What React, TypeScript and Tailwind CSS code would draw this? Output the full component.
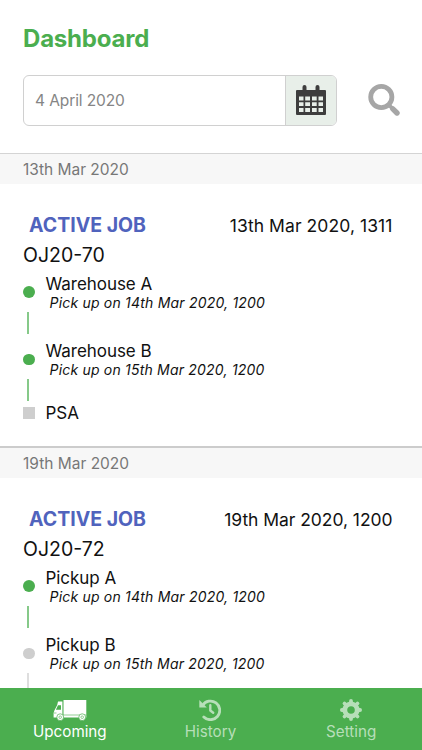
import React from "react";

type Stop = { name: string; note?: string; done: boolean; square?: boolean };
type Job = { day: string; time: string; timeClass: string; id: string; divider: string; height: string; stops: Stop[] };

const jobs: Job[] = [
  {
    day: "13th Mar 2020",
    time: "13th Mar 2020, 1311",
    timeClass: "tracking-[0.08px]",
    id: "OJ20-70",
    divider: "h-[31px] border-t border-[#d4d4d4]",
    height: "h-[293px]",
    stops: [
      { name: "Warehouse A", note: "Pick up on 14th Mar 2020, 1200", done: true },
      { name: "Warehouse B", note: "Pick up on 15th Mar 2020, 1200", done: true },
      { name: "PSA", done: false, square: true },
    ],
  },
  {
    day: "19th Mar 2020",
    time: "19th Mar 2020, 1200",
    timeClass: "tracking-[-0.05px]",
    id: "OJ20-72",
    divider: "h-8 border-t-2 border-[#cccccc]",
    height: "h-[294px]",
    stops: [
      { name: "Pickup A", note: "Pick up on 14th Mar 2020, 1200", done: true },
      { name: "Pickup B", note: "Pick up on 15th Mar 2020, 1200", done: false },
      { name: "PSA", done: false, square: true },
    ],
  },
];

function CalendarIcon() {
  return (
    <svg className="mb-[2px] h-[30px] w-[30px]" viewBox="0 0 30 30" fill="#3d3d3d">
      <path fillRule="evenodd" d="M1 5H6.5V2Q6.5 0 8.5 0T10.5 2V5H19.5V2Q19.5 0 21.5 0T23.5 2V5H29Q30 5 30 6V29Q30 30 29 30H1Q0 30 0 29V6Q0 5 1 5ZM3 11.5V15.5H7.5V11.5ZM9.2 11.5V15.5H14V11.5ZM16 11.5V15.5H20.7V11.5ZM22.5 11.5V15.5H27V11.5ZM3 17.3V21H7.5V17.3ZM9.2 17.3V21H14V17.3ZM16 17.3V21H20.7V17.3ZM22.5 17.3V21H27V17.3ZM3 23V27H7.5V23ZM9.2 23V27H14V23ZM16 23V27H20.7V23ZM22.5 23V27H27V23Z" />
    </svg>
  );
}

function SearchIcon() {
  return (
    <svg className="mb-px h-8 w-8" viewBox="0 0 32 32" fill="none" stroke="#a6a6a6">
      <circle cx="13.3" cy="13" r="10.6" strokeWidth="4.8" />
      <path d="M21 21L23.8 23.8" strokeWidth="3.8" />
      <path d="M24.8 24.8L29 29" strokeWidth="5.4" strokeLinecap="round" />
    </svg>
  );
}

function TruckIcon() {
  return (
    <svg className="h-[21px] w-[34px]" viewBox="0 0 34 21">
      <path fill="white" d="M10.3 0H33.3V17.5H10.3ZM5 1.6H9.6V17.5H.6V13L1.4 10.5L4.2 5Z" />
      <path fill="#4bae4f" d="M5 5.2H8V9.8H2.9Z" />
      <path fill="none" stroke="#4bae4f" strokeWidth=".6" d="M10 0V15H33.3M1 13H3.5" />
      <g fill="white" stroke="#4bae4f" strokeWidth=".7">
        <circle cx="7.2" cy="17.2" r="3.4" />
        <circle cx="29.2" cy="17.2" r="3.4" />
      </g>
      <g fill="none" stroke="#4bae4f" strokeWidth=".6">
        <circle cx="7.2" cy="17.2" r="1.3" />
        <circle cx="29.2" cy="17.2" r="1.3" />
      </g>
    </svg>
  );
}

function HistoryIcon() {
  return (
    <svg className="h-[22px] w-[22px]" viewBox="0 0 22 22" fill="none" stroke="currentColor">
      <path d="M3.6 6.4A9.3 9.3 0 1 1 4.8 17.9" strokeWidth="2.8" strokeLinecap="round" />
      <path d="M.3 1L.3 8.5H7.8Z" fill="currentColor" stroke="none" />
      <path d="M11.3 6.3V11.5L14.2 13.8" strokeWidth="2.4" strokeLinecap="round" strokeLinejoin="round" />
    </svg>
  );
}

function GearIcon() {
  return (
    <svg className="h-[22px] w-[22px]" viewBox="0 0 22 22" fill="none" stroke="currentColor">
      <circle cx="11" cy="11" r="6.2" strokeWidth="4.8" />
      <path d="M11 1.9V4M11 18V20.1M1.9 11H4M18 11H20.1M4.5 4.5L6 6M16 16L17.5 17.5M4.5 17.5L6 16M16 6L17.5 4.5" strokeWidth="3.8" strokeLinecap="round" />
    </svg>
  );
}

function StopRow({ stop }: { stop: Stop }) {
  const marker = stop.done ? "bg-[#4bae4f]" : "bg-[#cecece]";
  const line = stop.done ? "bg-[#86c989]" : "bg-[#dedede]";
  return (
    <div className={stop.note ? "flex h-[67.5px]" : "flex h-[30px]"}>
      <div className="flex w-[22.5px] shrink-0 flex-col">
        <span className={`h-[11.5px] w-[11.5px] shrink-0 ${stop.square ? "" : "mt-[14px] rounded-full"} ${marker}`} />
        {stop.note && <span className={`mt-[14px] ml-1 h-[22px] w-[2px] shrink-0 ${line}`} />}
      </div>
      <div className={stop.square ? "-mt-[5.5px]" : "pt-[0.5px]"}>
        <div className="text-[17px] leading-[22px] tracking-[-0.05px]">{stop.name}</div>
        {stop.note && <div className="ml-[4px] text-[14px] leading-4 tracking-[0.2px] italic">{stop.note}</div>}
      </div>
    </div>
  );
}

function JobSection({ job }: { job: Job }) {
  return (
    <section className={`${job.height} shrink-0`}>
      <div className={`${job.divider} flex items-center bg-[#f7f7f7] pt-[2px] pl-[23px] text-[15.5px] text-[#777]`}>{job.day}</div>
      <div className="pt-[28px] pr-[29.5px] pl-[23px]">
        <div className="flex h-[27px] items-center justify-between">
          <span className="pl-[6px] text-[19.5px] font-bold text-[#5063bd]">ACTIVE JOB</span>
          <span className={`pt-[2px] text-[17.5px] ${job.timeClass}`}>{job.time}</span>
        </div>
        <div className="mt-[2px] mb-[2px] text-[19.5px] leading-[29px]">{job.id}</div>
        {job.stops.map((stop) => <StopRow key={stop.name} stop={stop} />)}
      </div>
    </section>
  );
}

export default function App() {
  return (
    <div className="flex h-[750px] w-[422px] flex-col overflow-hidden bg-white font-['Inter',sans-serif] whitespace-nowrap text-[#111]">
      <header className="h-[153px] shrink-0 px-[23px] pt-[20px]">
        <h1 className="h-[55px] text-[24px] leading-[37px] font-bold tracking-[-0.2px] text-[#4bae4f]">Dashboard</h1>
        <div className="flex items-center">
          <div className="flex h-[51px] w-[314px] shrink-0 overflow-hidden rounded-[6px] border border-[#d0d0d0]">
            <div className="flex-1 pl-[11px] text-[15.5px] leading-[50px] tracking-[-0.1px] text-[#858585]">4 April 2020</div>
            <div className="flex w-[51px] items-center justify-center border-l border-[#d0d0d0] bg-[#e8efe9]"><CalendarIcon /></div>
          </div>
          <div className="ml-[31px] shrink-0"><SearchIcon /></div>
        </div>
      </header>
      <main className="flex min-h-0 flex-1 flex-col overflow-hidden">
        {jobs.map((job) => <JobSection key={job.id} job={job} />)}
      </main>
      <nav className="grid h-[62px] shrink-0 grid-cols-3 bg-[#4bae4f] text-[15.2px] text-[#b7dfb9]">
        <div className="flex flex-col items-center pt-[12px] pr-px text-white"><TruckIcon /><span className="leading-[22px]">Upcoming</span></div>
        <div className="flex flex-col items-center pt-[11px] pr-px"><HistoryIcon /><span className="leading-[22px]">History</span></div>
        <div className="flex flex-col items-center pt-[11px] pr-px"><GearIcon /><span className="leading-[22px]">Setting</span></div>
      </nav>
    </div>
  );
}
